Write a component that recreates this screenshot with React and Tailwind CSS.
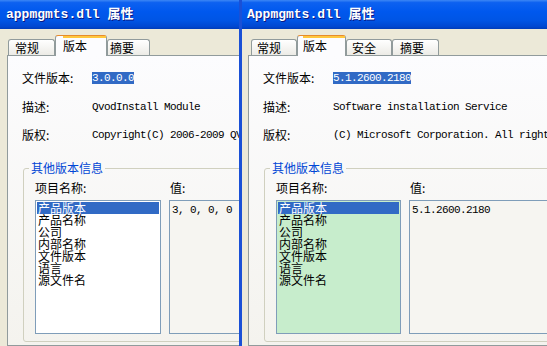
import React from "react";

const CJK = "[font-family:'Noto_Sans_CJK_SC',sans-serif]";
const MONO = "[font-family:'Liberation_Mono','Noto_Sans_CJK_SC',monospace] text-[11px] tracking-[-0.6px]";

function Tab({ label, active, cls }) {
  if (active) {
    return (
      <div className={`relative z-10 -mb-px flex h-[21px] flex-col rounded-t-[3px] border-x border-t border-x-[#919b9c] border-t-[#e68b2c] bg-[#fcfcfe] ${cls}`}>
        <div className="h-[2px] shrink-0 bg-[#ffc73c]" />
        <div className="flex flex-1 items-center pb-[2px] text-[12px] leading-none">{label}</div>
      </div>
    );
  }
  return (
    <div className={`flex h-[16px] items-center rounded-t-[3px] border-x border-t border-[#919b9c] bg-[linear-gradient(to_bottom,#ffffff,#ecebe6)] text-[12px] leading-none ${cls}`}>
      {label}
    </div>
  );
}

const ITEMS = ["产品版本", "产品名称", "公司", "内部名称", "文件版本", "语言", "源文件名"];

function Panel({ version, desc, copyright, value, listBg, listW }) {
  return (
    <div className={`w-[420px] flex-1 border border-[#919b9c] bg-[linear-gradient(to_bottom,#fcfcfe,#f4f3ee)] pl-[14px] text-black ${CJK}`}>
      <div className="mt-[14px] flex h-[16px] items-center">
        <div className="w-[70px] shrink-0 text-[12px] leading-[14px]">文件版本:</div>
        <span className={`h-[12px] bg-[#316ac5] leading-[12px] text-white ${MONO}`}>{version}</span>
      </div>
      <div className="mt-[13px] flex h-[16px] items-center">
        <div className="w-[70px] shrink-0 text-[12px] leading-[14px]">描述:</div>
        <span className={`whitespace-nowrap leading-[12px] ${MONO}`}>{desc}</span>
      </div>
      <div className="mt-[12px] flex h-[16px] items-center">
        <div className="w-[70px] shrink-0 text-[12px] leading-[14px]">版权:</div>
        <span className={`whitespace-nowrap leading-[12px] ${MONO}`}>{copyright}</span>
      </div>
      <fieldset className="mt-[18px] ml-[1px] w-[330px] rounded-[3px] border border-[#d0d0bf] pb-[7px] pl-[5px]">
        <legend className="px-[2px] text-[12px] leading-[14px] text-[#0046d5]">其他版本信息</legend>
        <div className={`grid gap-x-[8px] pl-[6px] ${listW}`}>
          <div className="mt-[6px] h-[14px] text-[12px] leading-[14px]">项目名称:</div>
          <div className="mt-[6px] h-[14px] pl-[1px] text-[12px] leading-[14px]">值:</div>
          <div className={`mt-[5px] h-[134px] border border-[#7f9db9] p-[1px] ${listBg}`}>
            {ITEMS.map((t, i) => (
              <div
                key={t}
                className={`h-[12px] pl-[1px] text-[12px] leading-[12px] ${i === 0 ? "bg-[#316ac5] text-white" : "text-black"}`}
              >
                {t}
              </div>
            ))}
          </div>
          <div className="mt-[5px] h-[134px] border border-[#7f9db9] bg-[#f6f5f1] pl-[2px] pt-[3px]">
            <div className={`whitespace-pre leading-[12px] ${MONO}`}>{value}</div>
          </div>
        </div>
      </fieldset>
    </div>
  );
}

const TITLE_BG =
  "bg-[linear-gradient(to_bottom,#3d87f5_0%,#0d61f0_9%,#0058ee_40%,#0055e5_70%,#0047d0_92%,#003cb8_100%)]";
const TITLE_TXT =
  "[font-family:'Liberation_Mono','Noto_Sans_CJK_SC',monospace] text-[13px] font-bold text-white [text-shadow:1px_1px_0_#0a1883] whitespace-nowrap";

export default function App() {
  return (
    <div className="flex h-[346px] w-[547px] overflow-hidden bg-[#ece9d8]">
      {/* left window */}
      <div className="flex h-full w-[239px] shrink-0 flex-col overflow-hidden">
        <div className={`flex h-[29px] shrink-0 items-center pl-[6px] ${TITLE_BG}`}>
          <span className={TITLE_TXT}>appmgmts.dll 属性</span>
        </div>
        <div className="flex flex-1 flex-col bg-[#ece9d8] pl-[7px] pt-[6px]">
          <div className={`flex h-[20px] items-end pl-[1px] ${CJK}`}>
            <Tab label="常规" cls="w-[47px] pl-[6px]" />
            <Tab label="版本" active cls="w-[52px] pl-[7px]" />
            <Tab label="摘要" cls="w-[43px] pl-[2px]" />
          </div>
          <Panel
            version="3.0.0.0"
            desc="QvodInstall Module"
            copyright="Copyright(C) 2006-2009 QVOD Technology Co., Ltd."
            value="3, 0, 0, 0"
            listBg="bg-white"
            listW="grid-cols-[126px_1fr]"
          />
        </div>
      </div>
      {/* right window */}
      <div className="flex h-full min-w-0 flex-1 flex-col overflow-hidden border-l-[3px] border-[#1a50d6]">
        <div className={`flex h-[29px] shrink-0 items-center pl-[5px] ${TITLE_BG}`}>
          <span className={TITLE_TXT}>Appmgmts.dll 属性</span>
        </div>
        <div className="flex flex-1 flex-col bg-[#ece9d8] pl-[6px] pt-[6px]">
          <div className={`flex h-[20px] items-end pl-[3px] ${CJK}`}>
            <Tab label="常规" cls="w-[46px] pl-[5px]" />
            <Tab label="版本" active cls="w-[49px] pl-[5px]" />
            <Tab label="安全" cls="w-[46px] pl-[5px]" />
            <Tab label="摘要" cls="w-[47px] pl-[7px]" />
          </div>
          <Panel
            version="5.1.2600.2180"
            desc="Software installation Service"
            copyright="(C) Microsoft Corporation. All rights reserved."
            value="5.1.2600.2180"
            listBg="bg-[#c7edcc]"
            listW="grid-cols-[125px_1fr]"
          />
        </div>
      </div>
    </div>
  );
}
